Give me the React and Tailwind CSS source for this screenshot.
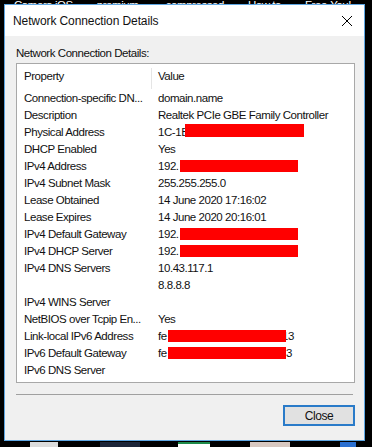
import React from "react";

// red boxes drawn over the redacted values; left is measured from the value column edge (x=151)
const rows = [
  ["Connection-specific DN...", "domain.name"],
  ["Description", "Realtek PCIe GBE Family Controller"],
  ["Physical Address", "1C-1B", { left: 34, top: 0, w: 119, h: 13 }],
  ["DHCP Enabled", "Yes"],
  ["IPv4 Address", "192.", { left: 29, top: 2, w: 118, h: 12 }],
  ["IPv4 Subnet Mask", "255.255.255.0"],
  ["Lease Obtained", "14 June 2020 17:16:02"],
  ["Lease Expires", "14 June 2020 20:16:01"],
  ["IPv4 Default Gateway", "192.", { left: 29, top: 2, w: 118, h: 12 }],
  ["IPv4 DHCP Server", "192.", { left: 29, top: 2, w: 118, h: 12 }],
  ["IPv4 DNS Servers", "10.43.117.1"],
  ["", "8.8.8.8"],
  ["IPv4 WINS Server", ""],
  ["NetBIOS over Tcpip En...", "Yes"],
  ["Link-local IPv6 Address", "fe", { left: 17, top: 2, w: 118, h: 12 }, ["13", 131]],
  ["IPv6 Default Gateway", "fe", { left: 17, top: 2, w: 118, h: 12 }, ["3", 135]],
  ["IPv6 DNS Server", ""],
];

function Row({ label, value, mask, tail }) {
  return (
    <div className="flex h-[17px] items-center">
      <div className="w-[134px] pl-[7px] whitespace-nowrap">{label}</div>
      <div className="relative flex-1 h-full flex items-center pl-[7px] whitespace-nowrap">
        <span>{value}</span>
        {tail && (
          <span className="absolute top-0 h-full flex items-center" style={{ left: tail[1] }}>
            {tail[0]}
          </span>
        )}
        {mask && (
          <span
            className="absolute bg-[#ff0000] z-10"
            style={{ left: mask.left, top: mask.top, width: mask.w, height: mask.h }}
          />
        )}
      </div>
    </div>
  );
}

export default function App() {
  return (
    <div
      className="w-[372px] h-[447px] bg-black overflow-hidden text-[11.5px] tracking-[-0.45px] text-[#111]"
      style={{ fontFamily: '"Liberation Sans", Arial, sans-serif' }}
    >
      <div className="h-[4px] overflow-hidden flex items-end text-white whitespace-nowrap leading-[14px]">
        <div className="flex gap-[24px] pl-[14px] translate-y-[8px]">
          <span>Camera iOS</span>
          <span>premium-</span>
          <span>compressed</span>
          <span>How to</span>
          <span>Free-You!</span>
        </div>
      </div>
      <div className="ml-[4px] w-[361px] h-[437px] border border-[#5ea6e2] bg-[#f0f0f0] flex flex-col">
        <div className="h-[31px] bg-white flex items-center justify-between pl-[8px] pr-[8px]">
          <span className="leading-[16px] text-[12px] tracking-[-0.1px] mt-[1px]">Network Connection Details</span>
          <svg width="12" height="12" viewBox="0 0 12 12" className="mr-[3px]">
            <path d="M1 1 L11 11 M11 1 L1 11" stroke="#000" strokeWidth="1" fill="none" />
          </svg>
        </div>
        <div className="pl-[11px] flex flex-col">
          <div className="mt-[9px] leading-[16px]">Network Connection Details:</div>
          <div className="mt-[2px] w-[339px] h-[320px] border border-[#a8a8a8] bg-white">
            <div className="flex h-[26px] items-center">
              <div className="w-[134px] pl-[7px] h-full flex items-center">Property</div>
              <div className="w-px h-[21px] bg-[#e5e5e5] mt-[3px]" />
              <div className="pl-[6px]">Value</div>
            </div>
            {rows.map(([l, v, m, t], i) => (
              <Row key={i} label={l} value={v} mask={m} tail={t} />
            ))}
          </div>
          <div className="mt-[11px] w-[337px] border-t border-[#a0a0a0]" />
          <div className="mt-[10px] flex justify-end pr-[9px]">
            <button className="w-[72px] h-[21px] border-2 border-[#2a7bc9] bg-[#e1e1e1] flex items-center justify-center leading-none text-[12px]">
              Close
            </button>
          </div>
        </div>
      </div>
      <div className="flex h-[6px] pt-[1px]">
        <div className="ml-[30px] w-[28px] bg-[#dcdcdc]" />
        <div className="ml-[42px] w-[40px] bg-[#1c2538]" />
        <div className="ml-[38px] w-[32px] bg-white border-t-2 border-[#1e8a4a]" />
        <div className="ml-[40px] w-[40px] bg-[#d8c8c0]" />
        <div className="ml-[50px] w-[16px] bg-[#2a6fd0]" />
      </div>
    </div>
  );
}
